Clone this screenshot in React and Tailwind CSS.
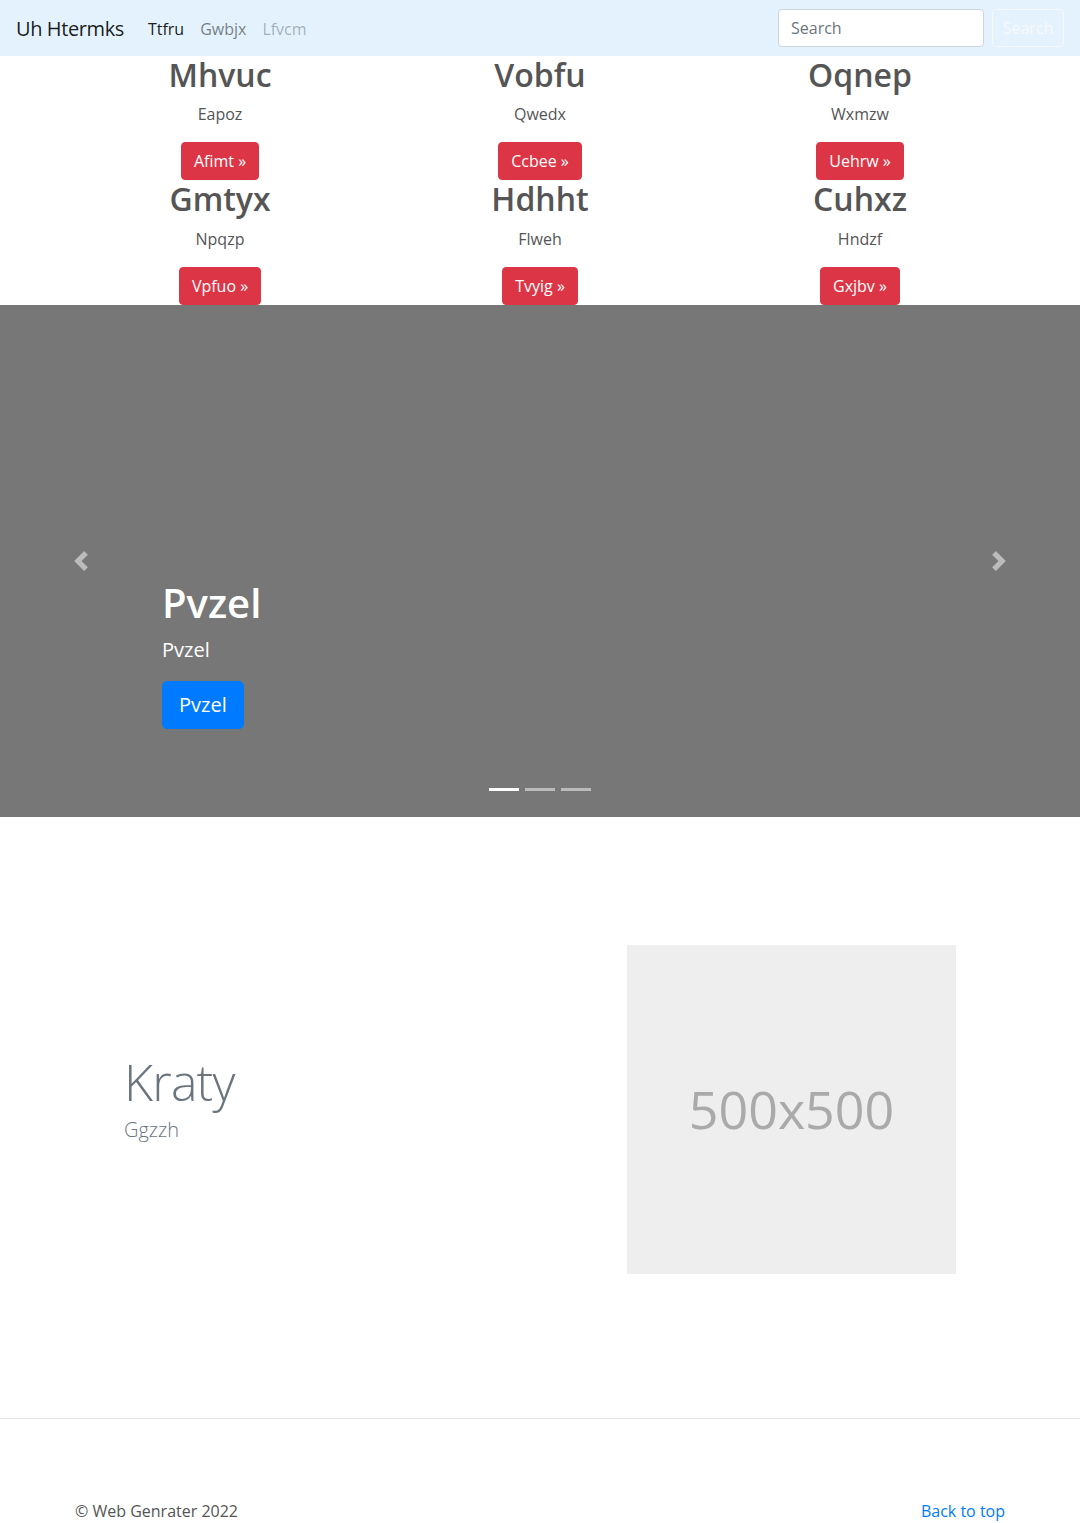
const features = [
  { title: "Mhvuc", text: "Eapoz", cta: "Afimt" },
  { title: "Vobfu", text: "Qwedx", cta: "Ccbee" },
  { title: "Oqnep", text: "Wxmzw", cta: "Uehrw" },
  { title: "Gmtyx", text: "Npqzp", cta: "Vpfuo" },
  { title: "Hdhht", text: "Flweh", cta: "Tvyig" },
  { title: "Cuhxz", text: "Hndzf", cta: "Gxjbv" },
];

function Navbar() {
  return (
    <nav className="h-14 bg-[#e3f2fd] flex items-center px-4 pt-[2px]">
      <a href="#" className="text-xl leading-[30px] text-black/90 mr-4 tracking-[-0.02em]">
        Uh Htermks
      </a>
      <ul className="flex">
        <li>
          <a href="#" className="block px-2 py-2 text-black/90">Ttfru</a>
        </li>
        <li>
          <a href="#" className="block px-2 py-2 text-black/50">Gwbjx</a>
        </li>
        <li>
          <span className="block px-2 py-2 text-black/30">Lfvcm</span>
        </li>
      </ul>
      <form className="ml-auto flex items-center -mt-[2px]" onSubmit={(e) => e.preventDefault()}>
        <input
          type="text"
          placeholder="Search"
          className="w-[206px] h-[38px] px-3 bg-white border border-[#ced4da] rounded text-[#495057] placeholder:text-[#6c757d] outline-none"
        />
        <button
          type="submit"
          className="ml-2 w-[72px] h-[38px] border border-[#f8f9fa] text-[#f8f9fa] rounded"
        >
          Search
        </button>
      </form>
    </nav>
  );
}

function Features() {
  return (
    <div className="w-[960px] mx-auto grid grid-cols-3">
      {features.map((f) => (
        <div key={f.title} className="text-center px-[15px]">
          <h2 className="text-[32px] font-semibold leading-[1.2] mb-2 text-[#555]">{f.title}</h2>
          <p className="mb-4 leading-6">{f.text}</p>
          <a
            href="#"
            className="inline-block bg-[#dc3545] border border-[#dc3545] text-white px-3 py-1.5 leading-6 rounded"
          >
            {f.cta} &raquo;
          </a>
        </div>
      ))}
    </div>
  );
}

function Chevron({ dir }) {
  const d =
    dir === "prev"
      ? "M5.25 0l-4 4 4 4 1.5-1.5L4.25 4l2.5-2.5L5.25 0z"
      : "M2.75 0l-1.5 1.5L3.75 4l-2.5 2.5L2.75 8l4-4-4-4z";
  return (
    <svg width="20" height="20" viewBox="0 0 8 8" className="opacity-50">
      <path d={d} fill="#fff" />
    </svg>
  );
}

function Carousel() {
  return (
    <div className="relative h-[512px] bg-[#777] flex flex-col justify-end px-[15%] pb-[88px] text-white">
      <h1 className="text-[40px] font-semibold leading-[1.2] mb-2">Pvzel</h1>
      <p className="text-xl leading-[1.5] mb-4">Pvzel</p>
      <a
        href="#"
        className="self-start bg-[#007bff] border border-[#007bff] text-xl leading-[1.5] px-4 py-2 rounded-[5px]"
      >
        Pvzel
      </a>
      <button className="absolute left-0 top-0 bottom-0 w-[15%] flex items-center justify-center">
        <Chevron dir="prev" />
      </button>
      <button className="absolute right-0 top-0 bottom-0 w-[15%] flex items-center justify-center">
        <Chevron dir="next" />
      </button>
      <ol className="absolute left-0 right-0 bottom-4 flex justify-center">
        <li className="w-[30px] h-[3px] mx-[3px] my-[10px] bg-white" />
        <li className="w-[30px] h-[3px] mx-[3px] my-[10px] bg-white/50" />
        <li className="w-[30px] h-[3px] mx-[3px] my-[10px] bg-white/50" />
      </ol>
    </div>
  );
}

function Featurette() {
  return (
    <div className="w-[960px] mx-auto flex items-center pt-[128px] pb-[144px]">
      <div className="flex-1 pl-[64px] text-[#6c757d]">
        <h2 className="text-[50px] font-light leading-none tracking-[-0.05rem] mb-2">Kraty</h2>
        <p className="text-xl font-light leading-[1.5] mb-4">Ggzzh</p>
      </div>
      <div className="w-[329px] h-[329px] mr-[64px] bg-[#eee] flex items-center justify-center text-[#aaa] text-[52px]">
        500x500
      </div>
    </div>
  );
}

function Footer() {
  return (
    <footer className="border-t border-[#e5e5e5]">
      <div className="w-[960px] mx-auto px-[15px] pt-[80px] pb-12 flex justify-between leading-6">
        <p>&copy; Web Genrater 2022</p>
        <a href="#" className="text-[#007bff]">Back to top</a>
      </div>
    </footer>
  );
}

export default function App() {
  return (
    <div className="min-h-screen bg-white text-[#555] text-base font-['Open_Sans',sans-serif]">
      <Navbar />
      <Features />
      <Carousel />
      <Featurette />
      <Footer />
    </div>
  );
}
